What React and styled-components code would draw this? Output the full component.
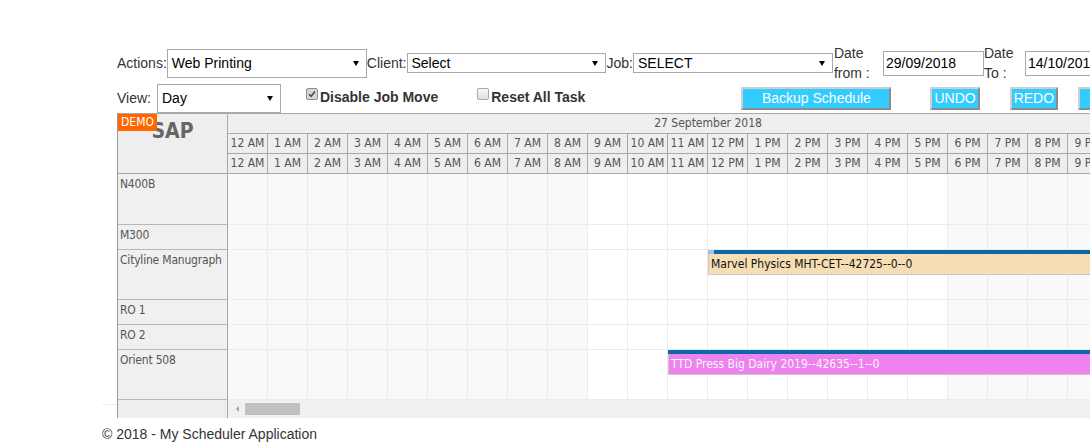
import React from 'react';
import styled, { createGlobalStyle } from 'styled-components';

const GlobalStyle = createGlobalStyle`
  html, body {
    margin: 0;
    padding: 0;
    overflow: hidden;
    background: #fff;
  }
  body {
    font-family: "Liberation Sans", Arial, sans-serif;
    font-size: 14px;
    color: #333;
  }
`;

const SCHED_FONT = `"DejaVu Sans Condensed", "DejaVu Sans", Tahoma, sans-serif`;
const HOUR_W = 40;

const Page = styled.div`
  padding: 43px 0 0 102px;
  width: max-content;
`;

const Content = styled.div`
  padding-left: 15px;
`;

const Toolbar = styled.div`
  display: flex;
  align-items: center;
  height: ${(p) => p.$h}px;
  white-space: nowrap;
`;

const Label = styled.span`
  line-height: 20px;
  margin-right: ${(p) => p.$gap || 0}px;
`;

const SelectBox = styled.div`
  box-sizing: border-box;
  display: flex;
  align-items: center;
  justify-content: space-between;
  width: ${(p) => p.$w}px;
  height: ${(p) => p.$h}px;
  padding: 0 7px 0 4px;
  margin-right: ${(p) => p.$mr || 0}px;
  border: 1px solid #a9a9a9;
  background: #fff;
  color: #000;
  font-size: 14px;
`;

const Caret = styled.span`
  width: 0;
  height: 0;
  border-left: 3px solid transparent;
  border-right: 3px solid transparent;
  border-top: 5px solid #000;
`;

const DateLabel = styled.span`
  display: inline-block;
  width: ${(p) => p.$w}px;
  line-height: 20px;
  white-space: normal;
`;

const DateInput = styled.div`
  box-sizing: border-box;
  width: 101px;
  height: 25px;
  padding-left: 2px;
  border: 1px solid #a9a9a9;
  color: #000;
  line-height: 23px;
  font-size: 14px;
`;

const CheckGroup = styled.label`
  display: flex;
  align-items: flex-start;
  align-self: flex-start;
  margin: 4px 0 0 ${(p) => p.$ml}px;
  line-height: 20px;
  font-weight: bold;
  color: #333;
`;

const CheckBox = styled.span`
  box-sizing: border-box;
  display: flex;
  align-items: center;
  justify-content: center;
  width: 12px;
  height: 12px;
  margin: 1px 2px 0 0;
  border: 1px solid ${(p) => (p.$checked ? '#8f8f8f' : '#a8a8a8')};
  border-radius: 2px;
  background: ${(p) => (p.$checked ? '#d6d6d6' : 'linear-gradient(#fafafa, #dedede)')};
`;

const ActionButton = styled.button`
  box-sizing: border-box;
  height: 23px;
  width: ${(p) => (p.$w ? `${p.$w}px` : 'auto')};
  padding: 0 2px;
  margin-left: ${(p) => p.$ml}px;
  border: 2px solid;
  border-color: #cfcfcf #8c8c8c #8c8c8c #cfcfcf;
  background: #33ccff;
  color: #fff;
  font-family: "Liberation Sans", Arial, sans-serif;
  font-size: 14px;
  line-height: 19px;
  white-space: nowrap;
  flex-shrink: 0;
`;

/* ---- scheduler ---- */

const Scheduler = styled.div`
  position: relative;
  z-index: 1;
  display: grid;
  grid-template-columns: 110px ${HOUR_W * 24}px;
  width: max-content;
  border-left: 1px solid #9a9a9a;
  border-top: 1px solid #a8a8a8;
  font-family: ${SCHED_FONT};
  font-size: 11px;
  color: #555;
  background: #fff;
`;

const Corner = styled.div`
  position: relative;
  box-sizing: border-box;
  height: 60px;
  padding-top: 5px;
  background: #eee;
  border-right: 1px solid #a8a8a8;
  border-bottom: 1px solid #a8a8a8;
  text-align: center;
  font-size: 21px;
  font-weight: bold;
  color: #666;
`;

const DemoBadge = styled.span`
  position: absolute;
  top: 0;
  left: 0;
  padding: 1px 3px 2px;
  background: #ff6600;
  color: #fff;
  font-size: 12px;
  font-weight: normal;
  line-height: 14px;
`;

const TimeHeader = styled.div`
  display: flex;
  flex-direction: column;
`;

const DateCell = styled.div`
  box-sizing: border-box;
  height: 20px;
  line-height: 18px;
  text-align: center;
  background: #eee;
  border-bottom: 1px solid #a8a8a8;
  font-size: 12px;
`;

const HourRow = styled.div`
  display: flex;
  height: 20px;
`;

const HourCell = styled.div`
  box-sizing: border-box;
  flex: 0 0 ${HOUR_W}px;
  line-height: 19px;
  text-align: center;
  background: #eee;
  border-right: 1px solid #a8a8a8;
  border-bottom: 1px solid #a8a8a8;
  font-size: 12px;
  white-space: nowrap;
  overflow: hidden;
`;

const RowHeads = styled.div`
  display: flex;
  flex-direction: column;
`;

const RowName = styled.div`
  box-sizing: border-box;
  height: ${(p) => p.$h}px;
  padding: 2px 2px;
  background: #f0f0f0;
  border-right: 1px solid #a8a8a8;
  border-bottom: 1px solid #b8b8b8;
  font-size: 12px;
  letter-spacing: -0.2px;
  line-height: 16px;
  white-space: nowrap;
`;

const Grid = styled.div`
  display: flex;
  flex-direction: column;
`;

const GridRow = styled.div`
  position: relative;
  display: flex;
  height: ${(p) => p.$h}px;
`;

const GridCell = styled.div`
  box-sizing: border-box;
  flex: 0 0 ${HOUR_W}px;
  background: ${(p) => (p.$business ? '#fff' : '#f9f9f9')};
  border-right: 1px solid #ebebeb;
  border-bottom: 1px solid #ebebeb;
`;

const EventBox = styled.div`
  position: absolute;
  top: 0;
  left: ${(p) => p.$start * HOUR_W}px;
  width: ${(p) => p.$hours * HOUR_W}px;
  height: 25px;
  display: flex;
  flex-direction: column;
`;

const DurationBar = styled.div`
  display: flex;
  height: 4px;
  background: #1066a8;
`;

const DurationDone = styled.span`
  width: 6px;
  background: #9cc2e5;
`;

const EventBody = styled.div`
  box-sizing: border-box;
  flex: 1;
  padding-left: 2px;
  background: ${(p) => p.$bg};
  color: ${(p) => p.$fg};
  border-left: 1px solid #c8c8c8;
  border-bottom: 1px solid #c8c8c8;
  font-size: 12px;
  line-height: 20px;
  white-space: nowrap;
  overflow: hidden;
`;

const ScrollCorner = styled.div`
  height: 18px;
  background: #eee;
  border-right: 1px solid #a8a8a8;
`;

const ScrollTrack = styled.div`
  display: flex;
  align-items: center;
  height: 18px;
  padding-left: 8px;
  background: #f1f1f1;
`;

const ScrollArrow = styled.span`
  width: 0;
  height: 0;
  border-top: 3px solid transparent;
  border-bottom: 3px solid transparent;
  border-right: 3px solid #a3a3a3;
  margin-right: 6px;
`;

const ScrollThumb = styled.span`
  width: 55px;
  height: 12px;
  background: #c1c1c1;
`;

const FooterRule = styled.hr`
  margin: -14px 0 0;
  border: 0;
  border-top: 1px solid #eee;
`;

const Footer = styled.footer`
  margin-top: 19px;
  line-height: 20px;
  color: #333;
`;

const hours = Array.from({ length: 24 }, (_, i) => {
  const h = i % 12 === 0 ? 12 : i % 12;
  return `${h} ${i < 12 ? 'AM' : 'PM'}`;
});

const resources = [
  { name: 'N400B', h: 51 },
  { name: 'M300', h: 25 },
  {
    name: 'Cityline Manugraph',
    h: 50,
    event: { start: 12, hours: 12, text: 'Marvel Physics MHT-CET--42725--0--0', bg: '#f5deb3', fg: '#111', done: true },
  },
  { name: 'RO 1', h: 25 },
  { name: 'RO 2', h: 25 },
  {
    name: 'Orient 508',
    h: 50,
    event: { start: 11, hours: 13, text: 'TTD Press Big Dairy 2019--42635--1--0', bg: '#ee82ee', fg: '#f8f8f8' },
  },
];

function Select({ value, w, h, mr }) {
  return (
    <SelectBox $w={w} $h={h} $mr={mr}>
      <span>{value}</span>
      <Caret />
    </SelectBox>
  );
}

function Check({ checked, label, ml }) {
  return (
    <CheckGroup $ml={ml}>
      <CheckBox $checked={checked}>
        {checked && (
          <svg width="8" height="8" viewBox="0 0 8 8">
            <path d="M1 4.2 L3.1 6.3 L7 1.5" fill="none" stroke="#4a4a4a" strokeWidth="1.6" />
          </svg>
        )}
      </CheckBox>
      {label}
    </CheckGroup>
  );
}

export default function App() {
  return (
    <>
      <GlobalStyle />
      <Page>
        <Content>
          <Toolbar $h={40}>
            <Label>Actions:</Label>
            <Select value="Web Printing" w={200} h={29} />
            <Label>Client:</Label>
            <Select value="Select" w={199} h={20} mr={1} />
            <Label>Job:</Label>
            <Select value="SELECT" w={200} h={20} mr={1} />
            <DateLabel $w={49}>Date from :</DateLabel>
            <DateInput>29/09/2018</DateInput>
            <DateLabel $w={41}>Date To :</DateLabel>
            <DateInput>14/10/2018</DateInput>
          </Toolbar>

          <Toolbar $h={30}>
            <Label $gap={6}>View:</Label>
            <Select value="Day" w={124} h={29} />
            <Check checked label="Disable Job Move" ml={25} />
            <Check label="Reset All Task" ml={39} />
            <ActionButton $w={150} $ml={156}>Backup Schedule</ActionButton>
            <ActionButton $ml={39}>UNDO</ActionButton>
            <ActionButton $ml={30}>REDO</ActionButton>
            <ActionButton $w={150} $ml={20}>Restore Schedule</ActionButton>
          </Toolbar>

          <Scheduler>
            <Corner>
              SAP
              <DemoBadge>DEMO</DemoBadge>
            </Corner>
            <TimeHeader>
              <DateCell>27 September 2018</DateCell>
              {[0, 1].map((r) => (
                <HourRow key={r}>
                  {hours.map((h) => (
                    <HourCell key={h}>{h}</HourCell>
                  ))}
                </HourRow>
              ))}
            </TimeHeader>

            <RowHeads>
              {resources.map((r) => (
                <RowName key={r.name} $h={r.h}>
                  {r.name}
                </RowName>
              ))}
            </RowHeads>
            <Grid>
              {resources.map((r) => (
                <GridRow key={r.name} $h={r.h}>
                  {hours.map((h, i) => (
                    <GridCell key={h} $business={i >= 9 && i < 18} />
                  ))}
                  {r.event && (
                    <EventBox $start={r.event.start} $hours={r.event.hours}>
                      <DurationBar>{r.event.done && <DurationDone />}</DurationBar>
                      <EventBody $bg={r.event.bg} $fg={r.event.fg}>
                        {r.event.text}
                      </EventBody>
                    </EventBox>
                  )}
                </GridRow>
              ))}
            </Grid>

            <ScrollCorner />
            <ScrollTrack>
              <ScrollArrow />
              <ScrollThumb />
            </ScrollTrack>
          </Scheduler>
        </Content>
        <FooterRule />
        <Footer>© 2018 - My Scheduler Application</Footer>
      </Page>
    </>
  );
}
